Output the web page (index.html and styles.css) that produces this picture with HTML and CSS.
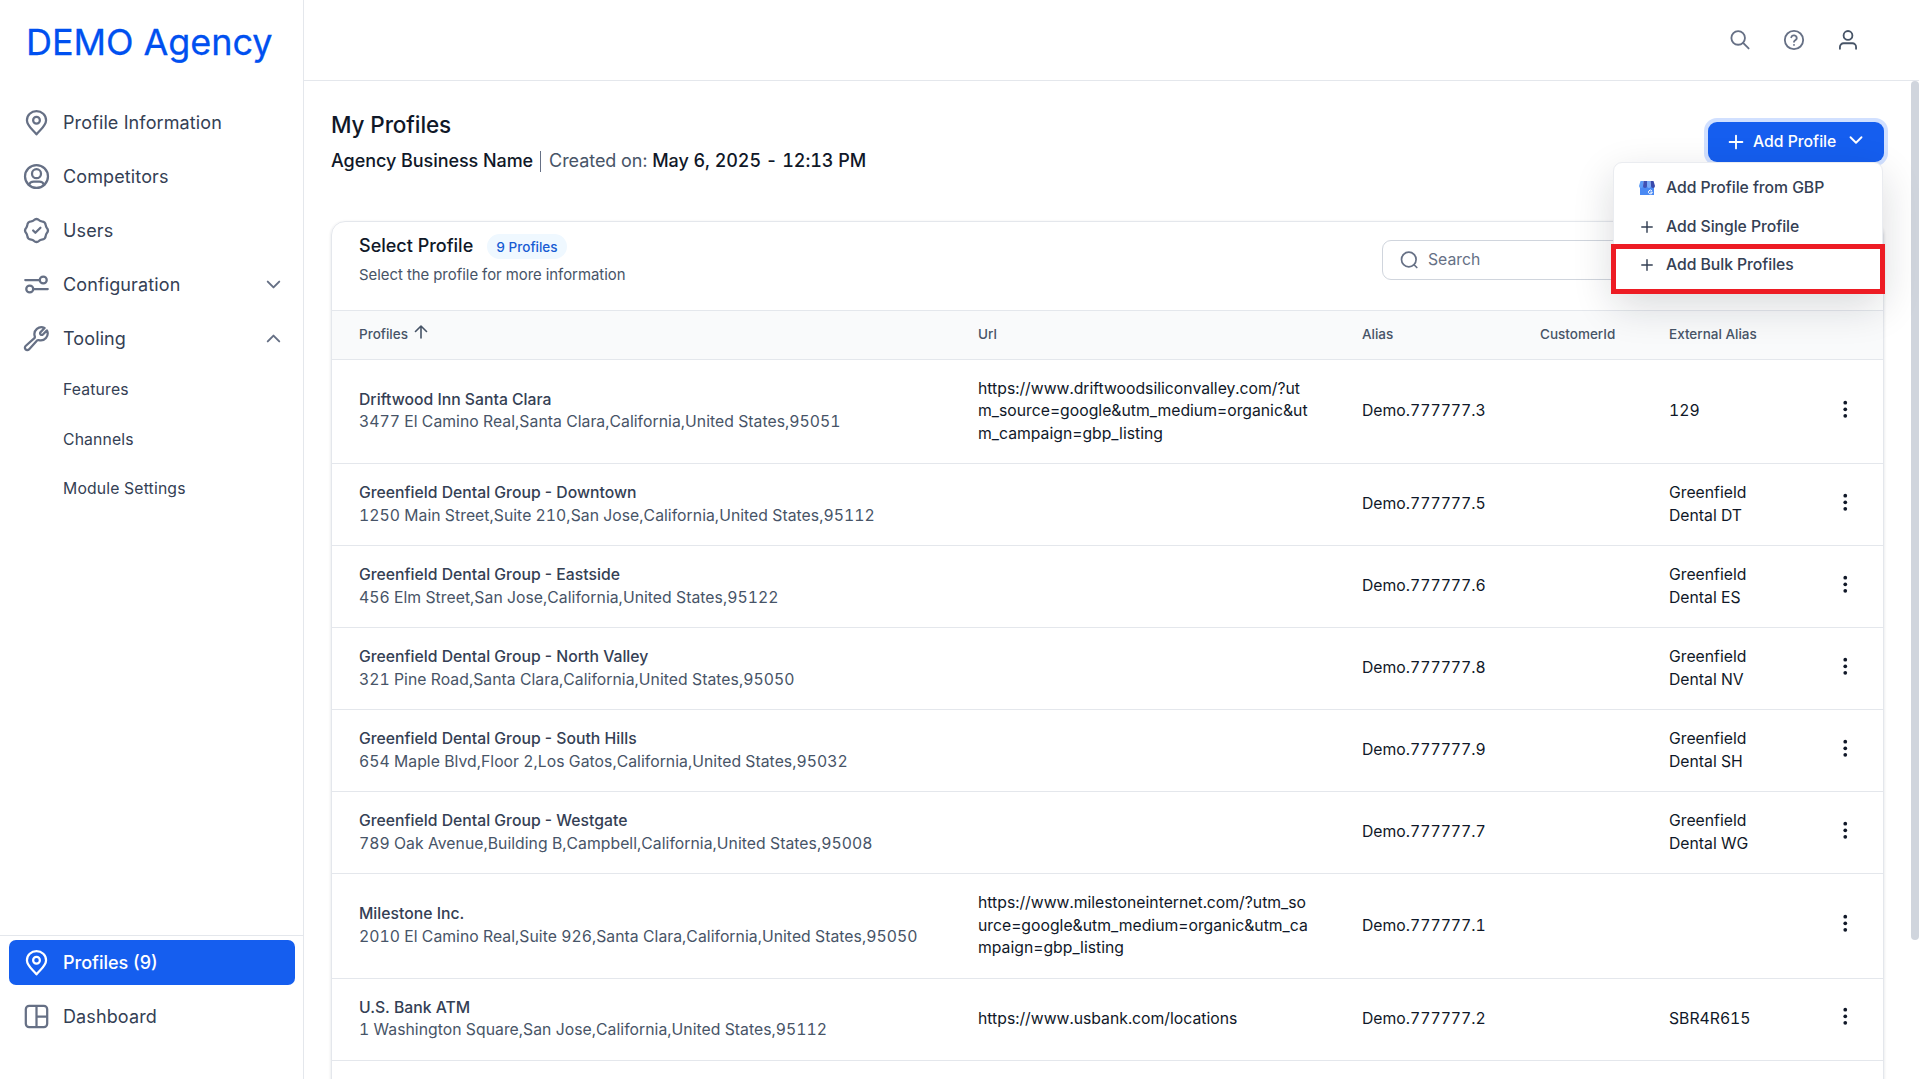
FILE: index.html
```html
<!DOCTYPE html>
<html lang="en">
  <head>
    <meta charset="UTF-8" />
    <meta name="viewport" content="width=device-width, initial-scale=1.0" />
    <title>My Profiles</title>
    <link rel="stylesheet" href="styles.css">
  </head>
  <body>
    <svg class="sprite">
      <symbol id="pin" viewBox="0 0 24 24">
        <path d="M12 13a3 3 0 1 0 0-6 3 3 0 0 0 0 6Z" />
        <path d="M12 22.500c3.500-4.300 8.500-7.500 8.500-12.500a8.500 8.200 0 1 0-17 0c0 5 5 8.200 8.500 12.500Z" />
      </symbol>
      <symbol id="plus" viewBox="0 0 20 20">
        <path d="M10 4.200v11.600M4.200 10h11.600" />
      </symbol>
      <symbol id="chevron" viewBox="0 0 20 20">
        <path d="m5 7.500 5 5 5-5" />
      </symbol>
      <symbol id="dots" viewBox="0 0 24 24">
        <circle cx="12" cy="5" r="2" />
        <circle cx="12" cy="12" r="2" />
        <circle cx="12" cy="19" r="2" />
      </symbol>
    </svg>

    <div class="layout">
      <aside class="sidebar">
        <div class="logo">DEMO Agency</div>
        <nav class="menu">
          <a class="menu-item">
            <svg class="icon"><use href="#pin" /></svg>
            <span>Profile Information</span>
          </a>
          <a class="menu-item">
            <svg class="icon" viewBox="0 0 24 24">
              <circle cx="12" cy="12" r="10.200" />
              <circle cx="12" cy="9.500" r="4" />
              <path d="M5.300 19.400C6 17.300 7.500 16.500 9.500 16.500h5c2 0 3.500.8 4.200 2.900" />
            </svg>
            <span>Competitors</span>
          </a>
          <a class="menu-item">
            <svg class="icon" viewBox="0 0 24 24">
              <path d="m9 12 2 2 4.500-4.500" />
              <path d="M7.300 3.800c.8-.1 1.600-.4 2.200-.9a3.800 3.800 0 0 1 5 0c.6.500 1.400.8 2.200.9a3.800 3.800 0 0 1 3.500 3.500c.1.800.4 1.600.9 2.200a3.800 3.800 0 0 1 0 5c-.5.600-.8 1.400-.9 2.200a3.800 3.800 0 0 1-3.500 3.500c-.8.100-1.600.4-2.200.9a3.800 3.800 0 0 1-5 0c-.6-.5-1.400-.8-2.200-.9a3.800 3.800 0 0 1-3.500-3.500c-.1-.8-.4-1.600-.9-2.200a3.800 3.800 0 0 1 0-5c.5-.6.8-1.400.9-2.200a3.800 3.800 0 0 1 3.500-3.500Z" />
            </svg>
            <span>Users</span>
          </a>
          <a class="menu-item">
            <svg class="icon" viewBox="0 0 24 24">
              <path d="M2 8h13M9 16h13" />
              <circle cx="18" cy="8" r="3.100" />
              <circle cx="6" cy="16" r="3.100" />
            </svg>
            <span>Configuration</span>
            <svg class="arrow"><use href="#chevron" /></svg>
          </a>
          <a class="menu-item">
            <svg class="icon" viewBox="0 0 24 24">
              <path d="M15.600 8.400c-.6-.6-.6-1.500 0-2.100l3.600-3.600A6.200 6.200 0 0 0 10.500 10.200c.1.600.1.900-.1 1.200L2.300 18.700a2.100 2.100 0 1 0 3 3l7.400-8.100c.3-.3.600-.3 1.200-.2a6.200 6.200 0 0 0 7.400-8.600l-3.600 3.600c-.6.600-1.500.6-2.100 0Z" />
            </svg>
            <span>Tooling</span>
            <svg class="arrow up"><use href="#chevron" /></svg>
          </a>
          <a class="sub-item">Features</a>
          <a class="sub-item">Channels</a>
          <a class="sub-item">Module Settings</a>
        </nav>
        <nav class="menu-bottom">
          <a class="menu-item active">
            <svg class="icon"><use href="#pin" /></svg>
            <span>Profiles (9)</span>
          </a>
          <a class="menu-item">
            <svg class="icon" viewBox="0 0 24 24">
              <rect x="2.500" y="2.500" width="19" height="19" rx="3" />
              <path d="M12 3v18M12 12h9" />
            </svg>
            <span>Dashboard</span>
          </a>
        </nav>
      </aside>

      <div class="page">
        <header class="topbar">
          <svg class="top-icon" viewBox="0 0 24 24">
            <circle cx="10" cy="9.800" r="7.400" />
            <path d="m15.400 15.200 6 6" />
          </svg>
          <svg class="top-icon" viewBox="0 0 24 24">
            <circle cx="12" cy="12" r="10" />
            <path d="M9 9a3.100 3.100 0 0 1 6 1c0 2-3 2.400-3 4M12 17.300v.1" />
          </svg>
          <svg class="top-icon dark" viewBox="0 0 24 24">
            <circle cx="12" cy="7" r="4.800" />
            <path d="M3.200 21.500v-2a4 4 0 0 1 4-4h9.600a4 4 0 0 1 4 4v2" />
          </svg>
        </header>

        <main class="content">
          <div class="page-head">
            <div>
              <h1>My Profiles</h1>
              <p class="meta"><b>Agency Business Name</b><i></i><span>Created on:</span><b>May 6, 2025 - 12:13 PM</b></p>
            </div>
            <div class="add">
              <button class="add-button">
                <svg><use href="#plus" /></svg>
                <span>Add Profile</span>
                <svg class="caret"><use href="#chevron" /></svg>
              </button>
              <div class="dropdown">
                <a>
                  <svg class="gbp" viewBox="0 0 16 14">
                    <path fill="#4a89f3" d="M1 5h14v9H1z" />
                    <path fill="#5c9cf8" d="M1.500 0H4.500L4 5a2 2 0 0 1-4 0z" />
                    <path fill="#3f51b5" d="M4.500 0H8v5a2 2 0 0 1-4 0z" />
                    <path fill="#7baaf7" d="M8 0h3.500L12 5a2 2 0 0 1-4 0z" />
                    <path fill="#3949ab" d="M11.500 0h3L16 5a2 2 0 0 1-4 0z" />
                    <path fill="none" stroke="#fff" stroke-width="1" d="M12.800 9.700a1.900 1.900 0 1 0 .5 1.500h-1.600" />
                  </svg>
                  Add Profile from GBP
                </a>
                <a><svg><use href="#plus" /></svg>Add Single Profile</a>
                <a><svg><use href="#plus" /></svg>Add Bulk Profiles</a>
                <div class="highlight"></div>
              </div>
            </div>
          </div>

          <section class="card">
            <div class="card-head">
              <div>
                <h2>Select Profile <span class="badge">9 Profiles</span></h2>
                <p>Select the profile for more information</p>
              </div>
              <div class="search">
                <svg viewBox="0 0 20 20">
                  <circle cx="9.800" cy="9.500" r="7.300" />
                  <path d="m15.300 15 2.500 2.500" />
                </svg>
                Search
              </div>
            </div>

            <div class="row head">
              <div>Profiles
                <svg viewBox="0 0 14 14"><path d="M7 13V1.500M1.500 6.500 7 1l5.500 5.500" /></svg>
              </div>
              <div>Url</div>
              <div>Alias</div>
              <div>CustomerId</div>
              <div>External Alias</div>
              <div></div>
            </div>
            <div class="row">
              <div><b>Driftwood Inn Santa Clara</b><span>3477 El Camino Real,Santa Clara,California,United States,95051</span></div>
              <div class="url">https://www.driftwoodsiliconvalley.com/?utm_source=google&amp;utm_medium=organic&amp;utm_campaign=gbp_listing</div>
              <div>Demo.777777.3</div>
              <div></div>
              <div>129</div>
              <div class="more"><svg><use href="#dots" /></svg></div>
            </div>
            <div class="row">
              <div><b>Greenfield Dental Group - Downtown</b><span>1250 Main Street,Suite 210,San Jose,California,United States,95112</span></div>
              <div></div>
              <div>Demo.777777.5</div>
              <div></div>
              <div>Greenfield Dental DT</div>
              <div class="more"><svg><use href="#dots" /></svg></div>
            </div>
            <div class="row">
              <div><b>Greenfield Dental Group - Eastside</b><span>456 Elm Street,San Jose,California,United States,95122</span></div>
              <div></div>
              <div>Demo.777777.6</div>
              <div></div>
              <div>Greenfield Dental ES</div>
              <div class="more"><svg><use href="#dots" /></svg></div>
            </div>
            <div class="row">
              <div><b>Greenfield Dental Group - North Valley</b><span>321 Pine Road,Santa Clara,California,United States,95050</span></div>
              <div></div>
              <div>Demo.777777.8</div>
              <div></div>
              <div>Greenfield Dental NV</div>
              <div class="more"><svg><use href="#dots" /></svg></div>
            </div>
            <div class="row">
              <div><b>Greenfield Dental Group - South Hills</b><span>654 Maple Blvd,Floor 2,Los Gatos,California,United States,95032</span></div>
              <div></div>
              <div>Demo.777777.9</div>
              <div></div>
              <div>Greenfield Dental SH</div>
              <div class="more"><svg><use href="#dots" /></svg></div>
            </div>
            <div class="row">
              <div><b>Greenfield Dental Group - Westgate</b><span>789 Oak Avenue,Building B,Campbell,California,United States,95008</span></div>
              <div></div>
              <div>Demo.777777.7</div>
              <div></div>
              <div>Greenfield Dental WG</div>
              <div class="more"><svg><use href="#dots" /></svg></div>
            </div>
            <div class="row">
              <div><b>Milestone Inc.</b><span>2010 El Camino Real,Suite 926,Santa Clara,California,United States,95050</span></div>
              <div class="url">https://www.milestoneinternet.com/?utm_source=google&amp;utm_medium=organic&amp;utm_campaign=gbp_listing</div>
              <div>Demo.777777.1</div>
              <div></div>
              <div></div>
              <div class="more"><svg><use href="#dots" /></svg></div>
            </div>
            <div class="row">
              <div><b>U.S. Bank ATM</b><span>1 Washington Square,San Jose,California,United States,95112</span></div>
              <div class="url">https://www.usbank.com/locations</div>
              <div>Demo.777777.2</div>
              <div></div>
              <div>SBR4R615</div>
              <div class="more"><svg><use href="#dots" /></svg></div>
            </div>
            <div class="row empty"></div>
          </section>
          <div class="scrollbar"></div>
        </main>
      </div>
    </div>
  </body>
</html>
```
FILE: styles.css
```css
* {
  box-sizing: border-box;
}

body {
  margin: 0;
  background-color: #fff;
  color: #101828;
  font-family: Inter, "Liberation Sans", sans-serif;
  font-size: 15.75px;
  line-height: 22.5px;
}

h1,
h2,
p {
  margin: 0;
}

svg {
  fill: none;
  stroke: currentColor;
  stroke-width: 2;
  stroke-linecap: round;
  stroke-linejoin: round;
  flex-shrink: 0;
}

.sprite {
  display: none;
}

.layout {
  display: flex;
  height: 100vh;
  overflow: hidden;
}

/* Sidebar */
.sidebar {
  display: flex;
  flex-direction: column;
  width: 304px;
  flex-shrink: 0;
  border-right: 1px solid #e4e7ec;
}

.logo {
  height: 95px;
  padding: 20px 0 0 26px;
  color: #0050f0;
  font-size: 36px;
  line-height: 44px;
  letter-spacing: -0.05px;
  white-space: nowrap;
  -webkit-text-stroke: 0.3px #0050f0;
}

.menu {
  flex: 1;
}

.menu-item {
  display: flex;
  align-items: center;
  height: 45px;
  margin: 5px 8px 9px 9px;
  padding: 0 14px;
  border-radius: 7px;
  color: #344054;
  font-size: 18px;
  letter-spacing: 0.12px;
}

.menu-item span {
  padding-top: 2px;
}

.icon {
  width: 27px;
  height: 27px;
  margin-right: 13px;
  color: #667085;
}

.arrow {
  width: 23px;
  height: 23px;
  margin-left: auto;
  margin-right: -4px;
  color: #667085;
  stroke-width: 1.7;
}

.up {
  transform: rotate(180deg);
}

.sub-item {
  display: block;
  height: 49.5px;
  padding: 9px 0 0 63px;
  color: #344054;
  letter-spacing: 0.15px;
}

.menu-bottom {
  height: 144px;
  border-top: 1px solid #e4e7ec;
}

.active {
  margin-top: 4px;
  background-color: #155eef;
  color: #fff;
  font-weight: 500;
  letter-spacing: 0;
}

.active .icon {
  color: #fff;
}

/* Top bar */
.page {
  flex: 1;
  min-width: 0;
}

.topbar {
  display: flex;
  justify-content: flex-end;
  align-items: center;
  gap: 32px;
  height: 81px;
  padding-right: 60px;
  border-bottom: 1px solid #e4e7ec;
}

.top-icon {
  width: 22px;
  height: 22px;
  color: #667085;
}

.dark {
  color: #475467;
}

.content {
  position: relative;
  height: 998px;
  padding: 28px 35px 0 27px;
  overflow: hidden;
}

.page-head {
  display: flex;
  justify-content: space-between;
  height: 112px;
}

h1 {
  font-size: 22.5px;
  font-weight: 500;
  line-height: 32px;
  letter-spacing: -0.1px;
}

.meta {
  display: flex;
  align-items: center;
  padding-top: 6px;
  color: #475467;
  font-size: 18px;
  line-height: 28px;
  letter-spacing: -0.06px;
  font-variant-numeric: tabular-nums;
}

.meta b {
  color: #101828;
  font-weight: 500;
}

.meta i {
  height: 21px;
  margin: 0 8px 0 7px;
  border-left: 1px solid #667085;
}

.meta span {
  margin-right: 5px;
}

/* Add profile button and its menu */
.add {
  position: relative;
  padding-top: 13px;
}

.add-button {
  display: flex;
  align-items: center;
  width: 176px;
  height: 40px;
  padding: 0 17px;
  border: 0;
  border-radius: 9px;
  background-color: #155eef;
  box-shadow: 0 0 0 4px #d1e0ff;
  color: #fff;
  font: 500 15.75px Inter, sans-serif;
}

.add-button span {
  padding-bottom: 2px;
}

.add-button svg {
  width: 22px;
  height: 22px;
  margin-right: 6px;
  stroke-width: 1.7;
}

.add-button .caret {
  margin: 0 0 4px auto;
}

.dropdown {
  position: absolute;
  top: 53px;
  right: 1px;
  z-index: 2;
  width: 270px;
  height: 130px;
  padding-top: 6px;
  border: 1px solid #eaecf0;
  border-radius: 9px;
  background-color: #fff;
  box-shadow: 0 14px 40px rgba(16, 24, 40, 0.16);
}

.dropdown a {
  display: flex;
  align-items: center;
  height: 38.5px;
  padding-left: 24px;
  color: #344054;
  font-weight: 500;
  letter-spacing: -0.05px;
}

.dropdown svg {
  width: 18px;
  height: 18px;
  margin-right: 10px;
  stroke-width: 1.6;
}

.dropdown .gbp {
  width: 16px;
  height: 14px;
  margin: 0 11px 0 1px;
  stroke: none;
}

.highlight {
  position: absolute;
  left: -3px;
  top: 81px;
  width: 274px;
  height: 50px;
  border: 5px solid #ed1c24;
}

/* Profiles table */
.card {
  height: 900px;
  border: 1px solid #e4e7ec;
  border-radius: 14px;
  box-shadow: 0 1px 3px rgba(16, 24, 40, 0.14);
  font-variant-numeric: tabular-nums;
}

.card-head {
  display: flex;
  justify-content: space-between;
  height: 88.5px;
  padding: 12px 26px 0 27px;
  border-bottom: 1px solid #e4e7ec;
}

.card-head h2 {
  display: flex;
  align-items: center;
  height: 25px;
  font-size: 18px;
  font-weight: 500;
}

.card-head p {
  padding-top: 5px;
  color: #475467;
  font-size: 14.9px;
}

.badge {
  height: 25px;
  margin-left: 14px;
  padding: 0 9px;
  border-radius: 13px;
  background-color: #eff8ff;
  color: #175cd3;
  font-size: 13.5px;
  line-height: 26px;
}

.search {
  display: flex;
  align-items: center;
  width: 475px;
  height: 40px;
  margin-top: 6px;
  padding-left: 16px;
  border: 1px solid #d0d5dd;
  border-radius: 9px;
  color: #667085;
}

.search svg {
  width: 20px;
  height: 20px;
  margin-right: 9px;
  stroke-width: 1.7;
}

.row {
  display: grid;
  grid-template-columns: 619px 384px 178px 129px 136px 1fr;
  align-items: center;
  padding: 18px 0;
  border-bottom: 1px solid #e4e7ec;
}

.row > div {
  padding-left: 27px;
  padding-right: 27px;
}

.row > div:first-child {
  padding-right: 0;
}

.row .url {
  word-break: break-all;
}

.row b {
  display: block;
  color: #344054;
  font-weight: 500;
  font-variant-numeric: normal;
}

.row span {
  display: block;
  color: #475467;
  letter-spacing: 0.035px;
}

.head {
  height: 49px;
  padding: 0;
  background-color: #f9fafb;
  color: #475467;
  font-size: 13.5px;
  font-weight: 500;
}

.head > div {
  padding-right: 0;
  white-space: nowrap;
}

.head svg {
  width: 14px;
  height: 14px;
  margin: 0 0 0 2px;
  stroke-width: 1.6;
}

.row .more {
  display: flex;
  justify-content: flex-end;
  color: #101828;
}

.more svg {
  width: 22.5px;
  height: 22.5px;
  margin-bottom: 5px;
  fill: currentColor;
  stroke: none;
}

.empty {
  height: 82px;
}

.scrollbar {
  position: absolute;
  top: 0;
  right: 0;
  width: 8px;
  height: 859px;
  border-radius: 4px;
  background-color: #d0d5dd;
}
```
